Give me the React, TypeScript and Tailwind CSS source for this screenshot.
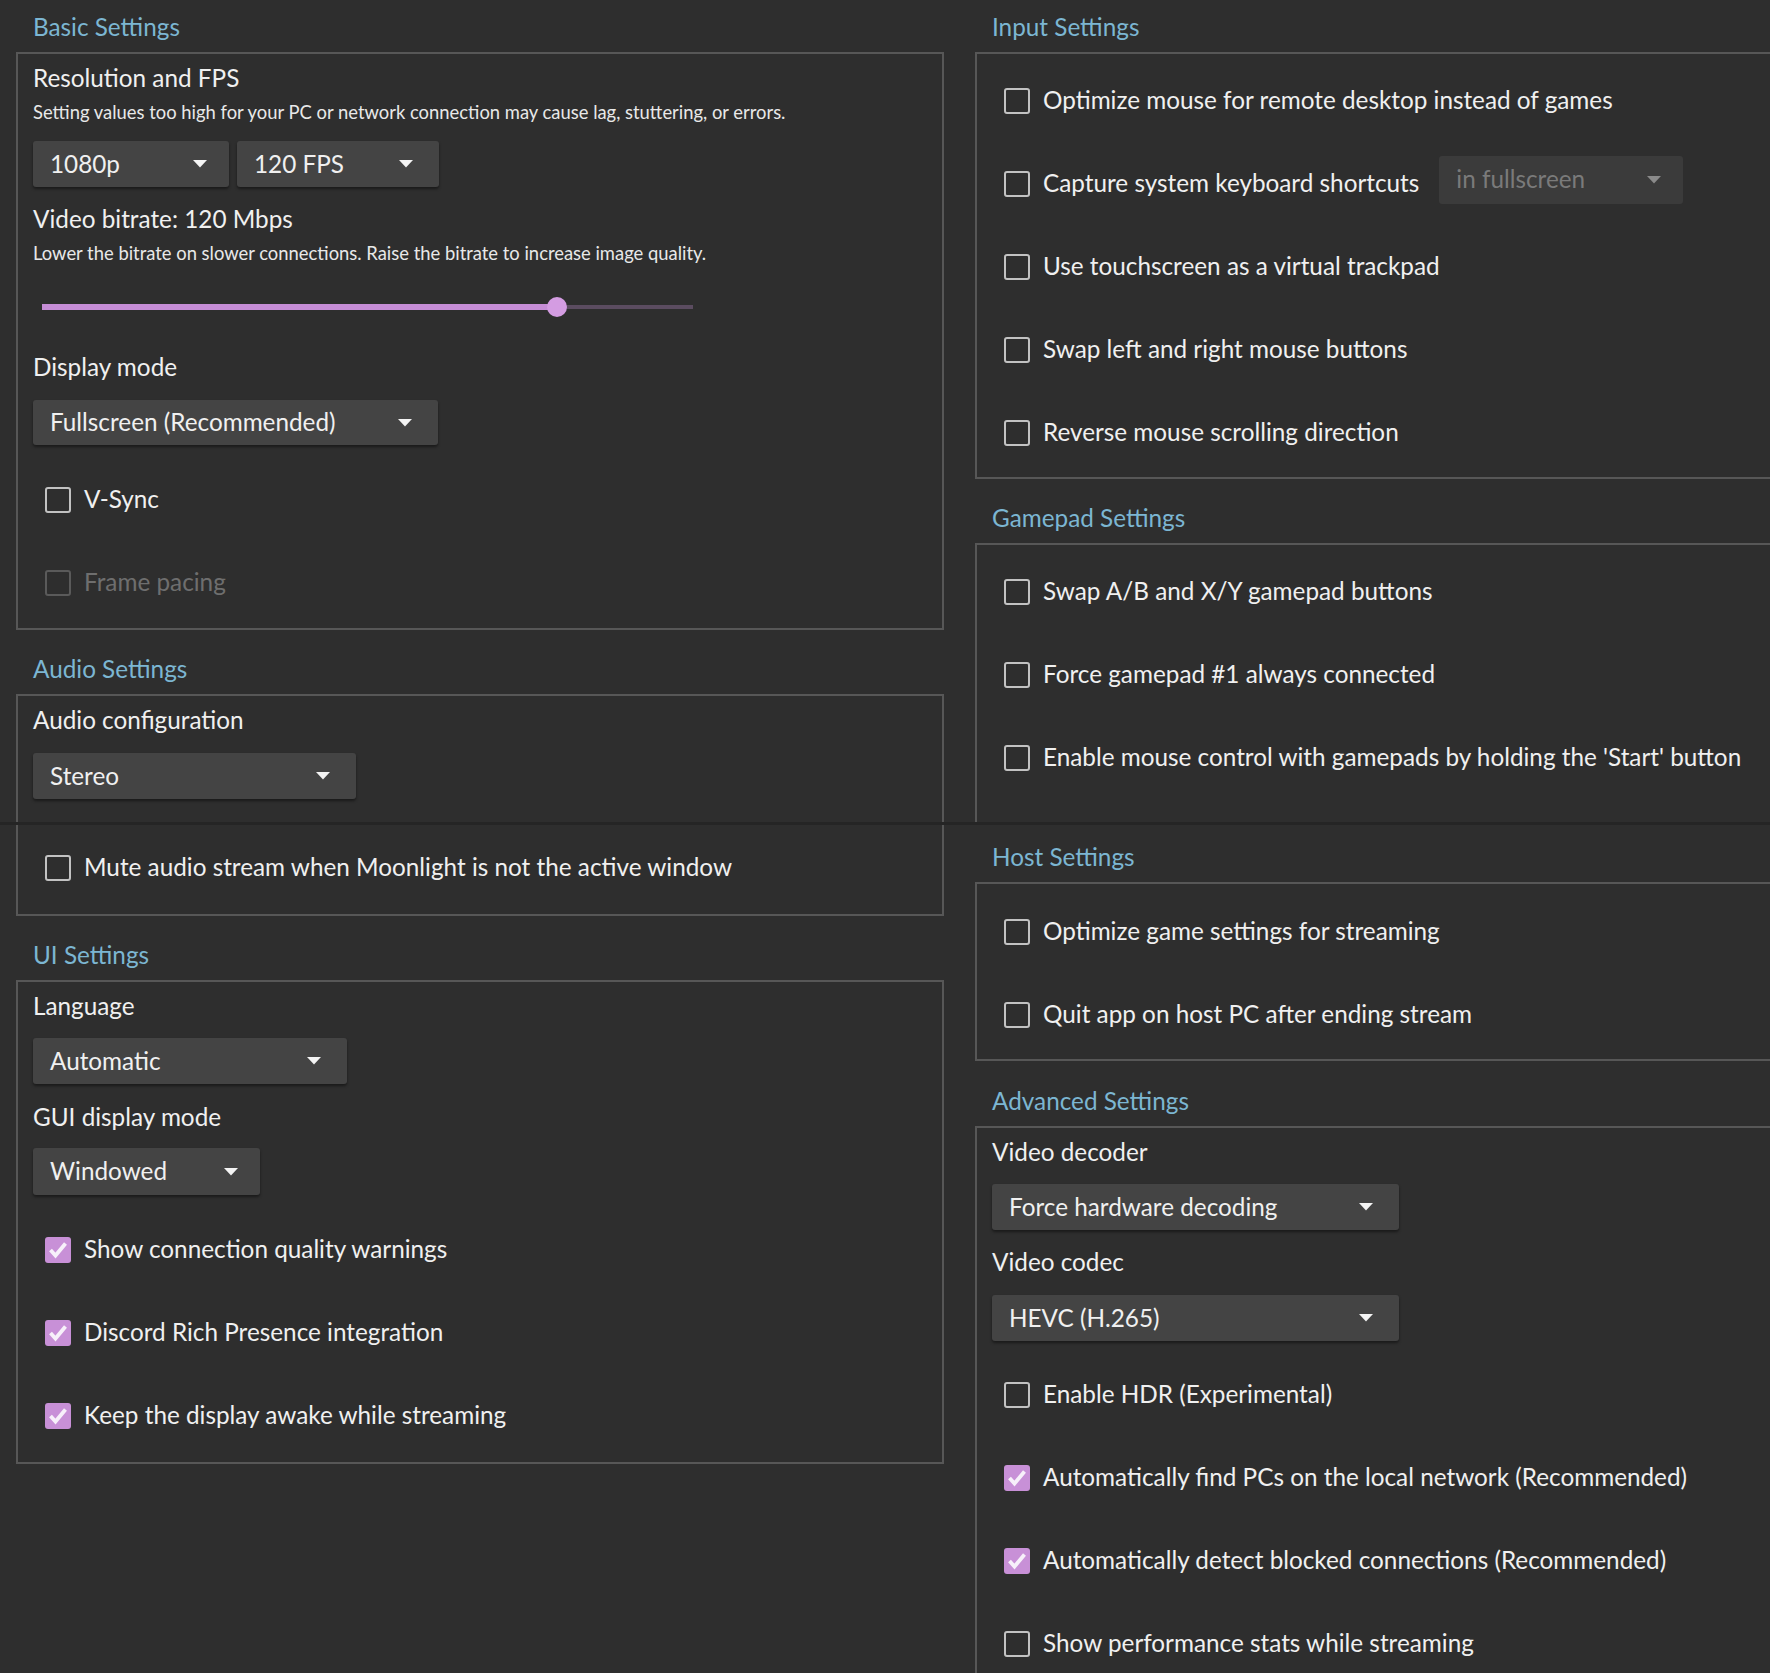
import clsx from "clsx";
import type { ReactNode } from "react";

// Moonlight-style streaming settings page, two columns of group boxes.

function Title({ children, className }: { children: ReactNode; className: string }) {
  return (
    <div className={clsx("shrink-0 h-[30px] leading-[30px] pl-[17px] mb-[10px] text-[24.3px] text-[#7cb6d2]", className)}>
      {children}
    </div>
  );
}

function Label({ children, className }: { children: ReactNode; className?: string }) {
  return <div className={clsx("h-[30px] leading-[30px] text-[24.3px] text-[#f0f0f0]", className)}>{children}</div>;
}

function Hint({ children, className }: { children: ReactNode; className?: string }) {
  return <div className={clsx("h-[24px] leading-[24px] text-[18.4px] text-[#e8e8e8]", className)}>{children}</div>;
}

function Arrow({ dim }: { dim?: boolean }) {
  return (
    <svg width="14" height="8" viewBox="0 0 14 8" className="shrink-0">
      <path d="M0 0h14L7 7.5z" fill={dim ? "#8a8a8a" : "#f4f4f4"} />
    </svg>
  );
}

function Combo({ value, className, disabled }: { value: string; className: string; disabled?: boolean }) {
  return (
    <div
      className={clsx(
        "flex items-center justify-between rounded-[3px] pl-[17px] pr-[22px] text-[24.3px] shrink-0",
        disabled
          ? "bg-[#3b3b3b] text-[#7a7a7a]"
          : "bg-[#444444] text-[#f0f0f0] shadow-[0_2px_3px_rgba(0,0,0,0.45)]",
        className,
      )}
    >
      <span>{value}</span>
      <Arrow dim={disabled} />
    </div>
  );
}

function Box({ children, className }: { children: ReactNode; className: string }) {
  return <div className={clsx("shrink-0 border-[#575757] px-[15px]", className)}>{children}</div>;
}

function Check({ label, checked, disabled, children }: { label: string; checked?: boolean; disabled?: boolean; children?: ReactNode }) {
  return (
    <div className="h-[83px] flex items-center pl-[12px] text-[24.3px]">
      <span
        className={clsx(
          "w-[26px] h-[26px] rounded-[3px] shrink-0 flex items-center justify-center",
          checked
            ? "bg-[#c890d7]"
            : disabled
              ? "border-[2.5px] border-[#5a5a5a]"
              : "border-[2.5px] border-[#c2c2c2]",
        )}
      >
        {checked && (
          <svg width="24" height="24" viewBox="0 0 24 24">
            <path d="M4.5 12l5 5.5L19.5 5.5" stroke="#f7f0fa" strokeWidth="3.8" fill="none" strokeLinejoin="miter" />
          </svg>
        )}
      </span>
      <span className={clsx("ml-[13px]", disabled ? "text-[#6e6e6e]" : "text-[#f0f0f0]")}>{label}</span>
      {children}
    </div>
  );
}

function Slider({ pct }: { pct: number }) {
  return (
    <div className="relative h-[30px] ml-[9px] w-[651px] flex items-center">
      <div className="h-[4px] w-full bg-[#5b4c60]" />
      <div className="absolute left-0 h-[6px] bg-[#c68dd6]" style={{ width: `${pct}%` }} />
      <div
        className="absolute w-[20px] h-[20px] rounded-full bg-[#d49ce2] -translate-x-1/2"
        style={{ left: `${pct}%` }}
      />
    </div>
  );
}

export default function App() {
  return (
    <div className="relative w-[1770px] h-[1673px] overflow-hidden bg-[#2e2e2e] font-[Lato,sans-serif] flex items-start">
      {/* left column */}
      <div className="ml-[16px] w-[928px] shrink-0 flex flex-col">
        <Title className="mt-[12px]">Basic Settings</Title>
        <Box className="border-2 pt-[9px] pb-[4px]">
          <Label>Resolution and FPS</Label>
          <Hint className="mt-[7px]">
            Setting values too high for your PC or network connection may cause lag, stuttering, or errors.
          </Hint>
          <div className="mt-[17px] flex gap-[8px]">
            <Combo value="1080p" className="w-[196px] h-[46px]" />
            <Combo value="120 FPS" className="w-[202px] h-[46px] pr-[26px]" />
          </div>
          <Label className="mt-[17px]">Video bitrate: 120 Mbps</Label>
          <Hint className="mt-[7px]">
            Lower the bitrate on slower connections. Raise the bitrate to increase image quality.
          </Hint>
          <div className="mt-[27px]">
            <Slider pct={79.1} />
          </div>
          <Label className="mt-[30px]">Display mode</Label>
          <Combo value="Fullscreen (Recommended)" className="mt-[18px] w-[405px] h-[45px] pr-[26px]" />
          <div className="mt-[13px]">
            <Check label="V-Sync" />
            <Check label="Frame pacing" disabled />
          </div>
        </Box>

        <Title className="mt-[24px]">Audio Settings</Title>
        <Box className="border-2 pt-[9px] pb-[5px]">
          <Label>Audio configuration</Label>
          <Combo value="Stereo" className="mt-[18px] w-[323px] h-[46px] pr-[26px]" />
          <div className="mt-[27px]">
            <Check label="Mute audio stream when Moonlight is not the active window" />
          </div>
        </Box>

        <Title className="mt-[24px]">UI Settings</Title>
        <Box className="border-2 pt-[9px] pb-[5px]">
          <Label>Language</Label>
          <Combo value="Automatic" className="mt-[17px] w-[314px] h-[46px] pr-[26px]" />
          <Label className="mt-[18px]">GUI display mode</Label>
          <Combo value="Windowed" className="mt-[16px] w-[227px] h-[47px] pr-[20px]" />
          <div className="mt-[13px]">
            <Check label="Show connection quality warnings" checked />
            <Check label="Discord Rich Presence integration" checked />
            <Check label="Keep the display awake while streaming" checked />
          </div>
        </Box>
      </div>

      {/* right column */}
      <div className="ml-[31px] w-[928px] shrink-0 flex flex-col">
        <Title className="mt-[12px]">Input Settings</Title>
        <Box className="border-2 pt-[5px] pb-[3px]">
          <Check label="Optimize mouse for remote desktop instead of games" />
          <Check label="Capture system keyboard shortcuts">
            <Combo value="in fullscreen" disabled className="ml-[20px] -mt-[8px] w-[244px] h-[48px] pr-[20px]" />
          </Check>
          <Check label="Use touchscreen as a virtual trackpad" />
          <Check label="Swap left and right mouse buttons" />
          <Check label="Reverse mouse scrolling direction" />
        </Box>

        <Title className="mt-[24px]">Gamepad Settings</Title>
        <Box className="border-x-2 border-t-2 h-[281px] pt-[5px]">
          <Check label="Swap A/B and X/Y gamepad buttons" />
          <Check label="Force gamepad #1 always connected" />
          <Check label="Enable mouse control with gamepads by holding the 'Start' button" />
        </Box>

        <Title className="mt-[18px]">Host Settings</Title>
        <Box className="border-2 pt-[6px] pb-[3px]">
          <Check label="Optimize game settings for streaming" />
          <Check label="Quit app on host PC after ending stream" />
        </Box>

        <Title className="mt-[25px]">Advanced Settings</Title>
        <Box className="border-x-2 border-t-2 pt-[9px]">
          <Label>Video decoder</Label>
          <Combo value="Force hardware decoding" className="mt-[17px] w-[407px] h-[46px] pr-[26px]" />
          <Label className="mt-[17px]">Video codec</Label>
          <Combo value="HEVC (H.265)" className="mt-[18px] w-[407px] h-[46px] pr-[26px]" />
          <div className="mt-[12px]">
            <Check label="Enable HDR (Experimental)" />
            <Check label="Automatically find PCs on the local network (Recommended)" checked />
            <Check label="Automatically detect blocked connections (Recommended)" checked />
            <Check label="Show performance stats while streaming" />
          </div>
        </Box>
      </div>

      {/* seam between the two stitched captures */}
      <div className="absolute left-0 right-0 top-[822px] h-[3px] bg-[#252525]" />
    </div>
  );
}
